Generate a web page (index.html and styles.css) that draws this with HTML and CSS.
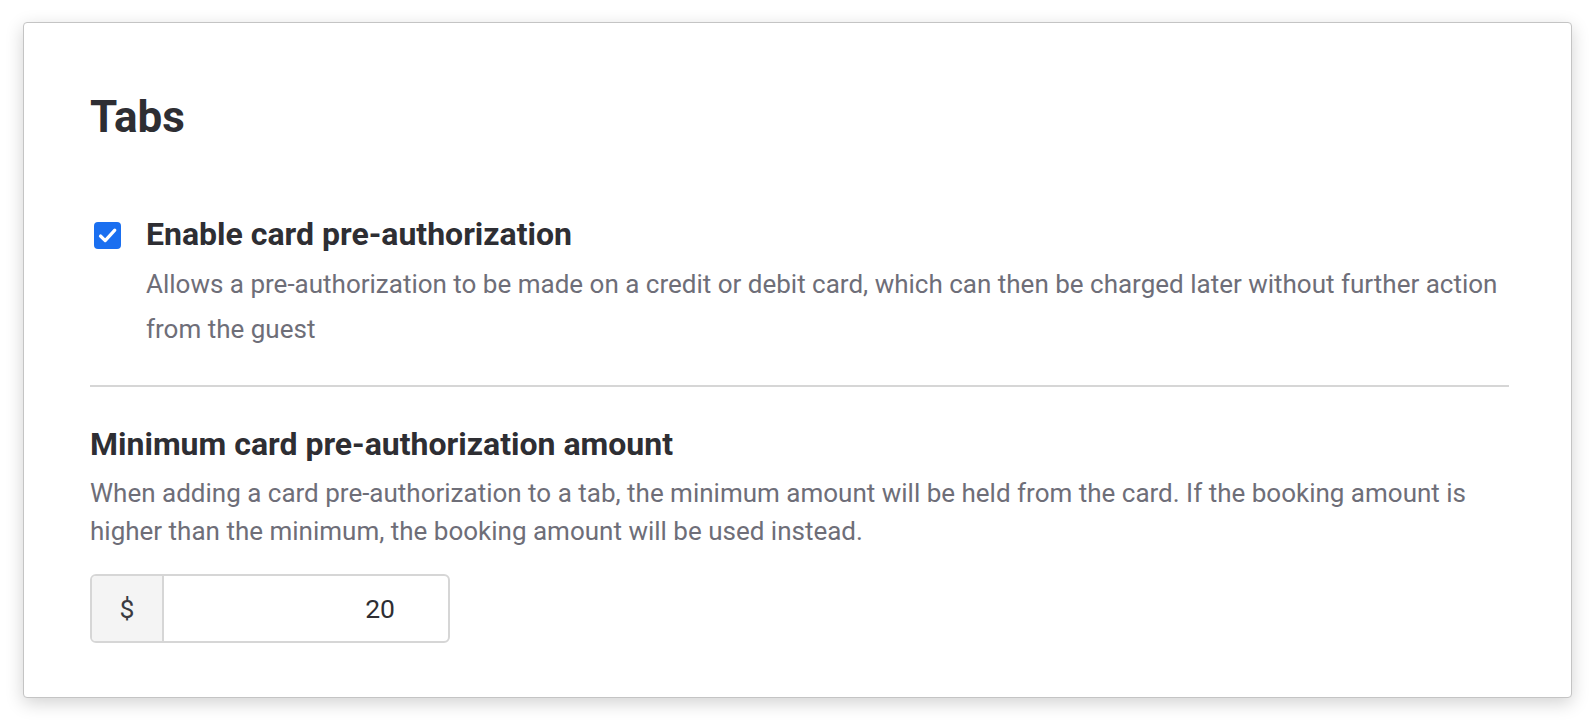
FILE: index.html
```html
<!DOCTYPE html>
<html lang="en">
<head>
<meta charset="utf-8">
<title>Tabs</title>
<link rel="stylesheet" href="styles.css">
</head>
<body>
<section class="card">
  <h1 class="title">Tabs</h1>
  <div class="option">
    <span class="checkbox" role="checkbox" aria-checked="true">
      <svg viewBox="0 0 27 27" width="27" height="27"><path d="M6.5 14L11.2 18.6L20.8 8.2" fill="none" stroke="#fff" stroke-width="3.2" stroke-linecap="round" stroke-linejoin="round"/></svg>
    </span>
    <div class="option-text">
      <div class="option-label">Enable card pre-authorization</div>
      <p class="option-desc">Allows a pre-authorization to be made on a credit or debit card, which can then be charged later without further action from the guest</p>
    </div>
  </div>
  <hr class="divider">
  <h2 class="field-title">Minimum card pre-authorization amount</h2>
  <p class="field-desc">When adding a card pre-authorization to a tab, the minimum amount will be held from the card. If the booking amount is higher than the minimum, the booking amount will be used instead.</p>
  <div class="input-group">
    <span class="prefix">$</span>
    <span class="value">20</span>
  </div>
</section>
</body>
</html>
```

FILE: styles.css
```css
html, body {
  margin: 0;
  padding: 0;
  background: #ffffff;
}
body {
  font-family: Roboto, "Liberation Sans", Arial, sans-serif;
  padding: 22px 24px 24px 23px;
}
.card {
  box-sizing: border-box;
  width: 1549px;
  height: 676px;
  background: #fff;
  border: 1px solid #c4c4c4;
  border-radius: 4px;
  box-shadow: 0 5px 18px rgba(0,0,0,0.18);
  padding: 68px 62px 0 66px;
}
.title {
  margin: 0;
  font-size: 44px;
  font-weight: 700;
  color: #2e2e33;
  line-height: 52px;
}
.option {
  display: flex;
  align-items: flex-start;
  gap: 25px;
  margin-top: 72px;
}
.checkbox {
  flex: none;
  width: 27px;
  height: 27px;
  margin-left: 4px;
  margin-top: 7px;
  border-radius: 4px;
  background: #1a6ff0;
  display: flex;
  align-items: center;
  justify-content: center;
}
.option-label {
  font-size: 32px;
  font-weight: 700;
  color: #2e2e33;
  line-height: 38px;
}
.option-desc {
  margin: 9px 0 0;
  font-size: 26px;
  line-height: 45px;
  color: #6e6e78;
}
.divider {
  border: 0;
  border-top: 2px solid #d6d6d6;
  margin: 33px 0 0;
}
.field-title {
  margin: 38px 0 0;
  font-size: 32px;
  font-weight: 700;
  color: #2e2e33;
  line-height: 38px;
}
.field-desc {
  margin: 12px 0 0;
  font-size: 26px;
  line-height: 37.7px;
  color: #6e6e78;
}
.input-group {
  display: flex;
  box-sizing: border-box;
  width: 360px;
  height: 69px;
  margin-top: 24px;
  border: 2px solid #d6d6d6;
  border-radius: 6px;
  overflow: hidden;
}
.prefix {
  flex: none;
  width: 70px;
  background: #f4f4f4;
  border-right: 2px solid #d6d6d6;
  display: flex;
  align-items: center;
  justify-content: center;
  font-size: 26.5px;
  color: #3a3a40;
}
.value {
  flex: 1;
  display: flex;
  align-items: center;
  justify-content: flex-end;
  padding-right: 53px;
  font-size: 26.5px;
  color: #2e2e33;
}
```
